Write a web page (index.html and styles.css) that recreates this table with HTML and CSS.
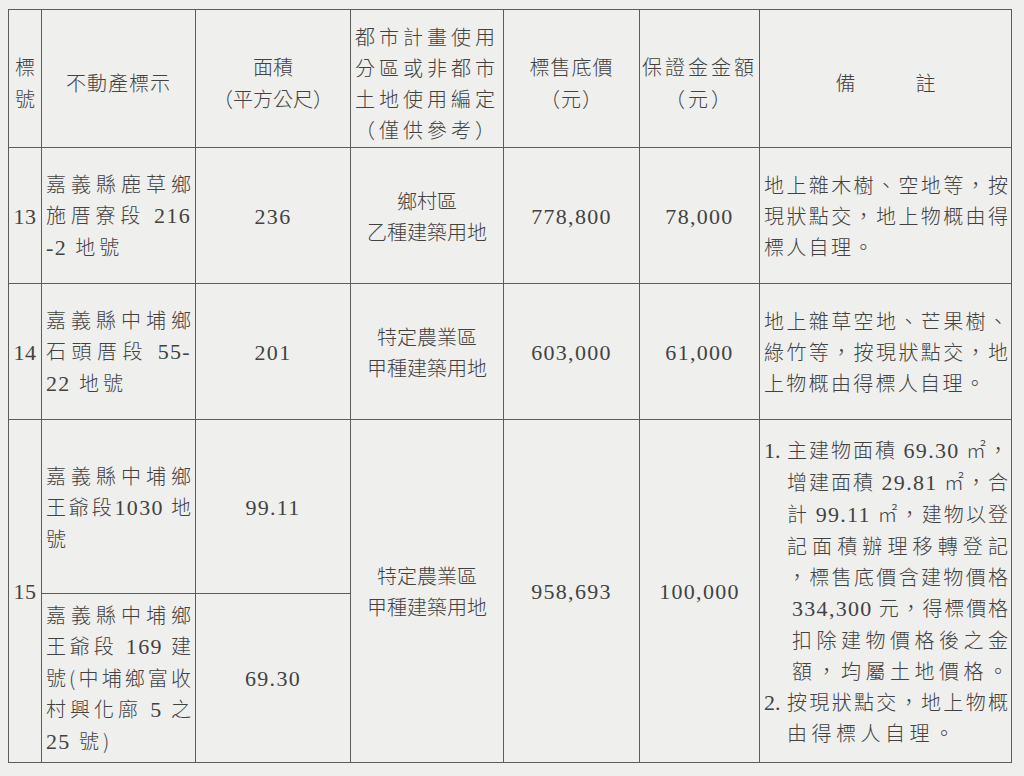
FILE: index.html
```html
<!DOCTYPE html>
<html lang="zh-Hant">
<head>
<meta charset="utf-8">
<title>標售清冊</title>
<link rel="stylesheet" href="styles.css">
</head>
<body>
<table class="sheet">
  <colgroup>
    <col class="c1"><col class="c2"><col class="c3"><col class="c4"><col class="c5"><col class="c6"><col class="c7">
  </colgroup>
  <tr class="head">
    <th>標<br>號</th>
    <th class="sp1">不動產標示</th>
    <th>面積<br>（平方公尺）</th>
    <th class="sp4">都市計畫使用<br>分區或非都市<br>土地使用編定<br>（僅供參考）</th>
    <th class="sp1">標售底價<br>（元）</th>
    <th class="sp3">保證金金額<br>（元）</th>
    <th>備　　　註</th>
  </tr>
  <tr class="r13">
    <td class="no"><span class="n">13</span></td>
    <td class="loc">
      <span class="j">嘉義縣鹿草鄉</span>
      <span class="j">施厝寮段 <span class="n">216</span></span>
      <span class="l"><span class="n">-2</span> 地號</span>
    </td>
    <td class="num"><span class="n">236</span></td>
    <td class="zone">鄉村區<br>乙種建築用地</td>
    <td class="num"><span class="n">778,800</span></td>
    <td class="num"><span class="n">78,000</span></td>
    <td class="note">
      <span class="j">地上雜木樹、空地等，按</span>
      <span class="j">現狀點交，地上物概由得</span>
      <span class="l">標人自理。</span>
    </td>
  </tr>
  <tr class="r14">
    <td class="no"><span class="n">14</span></td>
    <td class="loc">
      <span class="j">嘉義縣中埔鄉</span>
      <span class="j">石頭厝段 <span class="n">55-</span></span>
      <span class="l"><span class="n">22</span> 地號</span>
    </td>
    <td class="num"><span class="n">201</span></td>
    <td class="zone">特定農業區<br>甲種建築用地</td>
    <td class="num"><span class="n">603,000</span></td>
    <td class="num"><span class="n">61,000</span></td>
    <td class="note">
      <span class="j">地上雜草空地、芒果樹、</span>
      <span class="j">綠竹等，按現狀點交，地</span>
      <span class="l">上物概由得標人自理。</span>
    </td>
  </tr>
  <tr class="r15a">
    <td class="no" rowspan="2"><span class="n">15</span></td>
    <td class="loc">
      <span class="j">嘉義縣中埔鄉</span>
      <span class="j">王爺段<span class="n">1030</span> 地</span>
      <span class="l">號</span>
    </td>
    <td class="num"><span class="n">99.11</span></td>
    <td class="zone" rowspan="2">特定農業區<br>甲種建築用地</td>
    <td class="num" rowspan="2"><span class="n">958,693</span></td>
    <td class="num" rowspan="2"><span class="n">100,000</span></td>
    <td class="note wide" rowspan="2">
      <div class="item">
        <span class="mk"><span class="n">1.</span></span>
        <div class="body">
          <span class="j">主建物面積 <span class="n">69.30</span> ㎡，</span>
          <span class="j">增建面積 <span class="n">29.81</span> ㎡，合</span>
          <span class="j">計 <span class="n">99.11</span> ㎡，建物以登</span>
          <span class="j">記面積辦理移轉登記</span>
          <span class="j">，標售底價含建物價格</span>
          <span class="j in"><span class="n">334,300</span> 元，得標價格</span>
          <span class="j in">扣除建物價格後之金</span>
          <span class="l in">額，均屬土地價格。</span>
        </div>
      </div>
      <div class="item">
        <span class="mk"><span class="n">2.</span></span>
        <div class="body">
          <span class="j">按現狀點交，地上物概</span>
          <span class="l">由得標人自理。</span>
        </div>
      </div>
    </td>
  </tr>
  <tr class="r15b">
    <td class="loc">
      <span class="j">嘉義縣中埔鄉</span>
      <span class="j">王爺段 <span class="n">169</span> 建</span>
      <span class="j">號(中埔鄉富收</span>
      <span class="j">村興化廍 <span class="n">5</span> 之</span>
      <span class="l"><span class="n">25</span> 號)</span>
    </td>
    <td class="num"><span class="n">69.30</span></td>
  </tr>
</table>
</body>
</html>
```

FILE: styles.css
```css
html, body {
  margin: 0;
  padding: 0;
  background: #efefed;
}
body {
  font-family: "Liberation Serif", "Noto Sans CJK TC", serif;
  color: #424242;
  font-size: 20px;
}
.sheet {
  border-collapse: collapse;
  table-layout: fixed;
  width: 1003px;
  margin: 9px 0 0 8px;
}
.c1 { width: 33px; }
.c2 { width: 154px; }
.c3 { width: 155px; }
.c4 { width: 153px; }
.c5 { width: 136px; }
.c6 { width: 120px; }
.c7 { width: 252px; }

.sheet th, .sheet td {
  border: 1px solid #5c5c5c;
  padding: 0;
  vertical-align: middle;
  text-align: center;
  font-weight: 300;
  line-height: 31px;
  white-space: nowrap;
  font-family: "Noto Sans CJK TC", sans-serif;
}
.sheet th {
  line-height: 32px;
  padding-top: 8px;
}
.sheet .sp1 { letter-spacing: 1px; }
.sheet .sp3 { letter-spacing: 3px; }
.sheet .sp4 { letter-spacing: 4px; line-height: 31px; }

.head { height: 138px; }
.r13 { height: 136px; }
.r14 { height: 136px; }
.r15a { height: 174px; }
.r15b { height: 169px; }

.n {
  font-family: "Liberation Serif", serif;
  font-size: 22px;
  font-weight: 400;
  letter-spacing: 1.3px;
}
.sheet .no .n { letter-spacing: 0.5px; }

.sheet .loc {
  text-align: left;
  padding: 0 4px;
}
.sheet .note {
  text-align: left;
  padding: 0 3px 0 4px;
}
.j {
  display: block;
  text-align: justify;
  text-align-last: justify;
}
.l {
  display: block;
  text-align: left;
}
.loc .l { letter-spacing: 4px; }
.note .l { letter-spacing: 2.3px; }
.wide .l { letter-spacing: 4.5px; }
.wide { padding-top: 2px; }

.item {
  display: flex;
}
.mk {
  flex: 0 0 23px;
}
.mk .n { letter-spacing: 0; }
.body {
  flex: 1 1 auto;
  min-width: 0;
}
.in { padding-left: 5px; }
```
